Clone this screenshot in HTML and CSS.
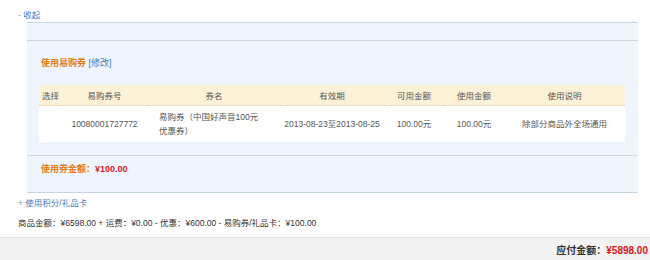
FILE: index.html
```html
<!DOCTYPE html>
<html lang="zh-CN">
<head>
    <meta charset="UTF-8">
    <title>使用易购券</title>
    <link rel="stylesheet" href="styles.css">
</head>
<body>

    <div class="page">
        <div class="toggle"><span class="sign">-</span> <a href="#">收起</a></div>

        <div class="panel">
            <div class="panel-tabs"></div>
            <div class="panel-body">
                <h3 class="coupon-title">使用易购券 <a href="#">[修改]</a></h3>
                <table class="coupons">
                    <colgroup>
                        <col class="c-select">
                        <col class="c-no">
                        <col class="c-name">
                        <col class="c-date">
                        <col class="c-avail">
                        <col class="c-used">
                        <col class="c-desc">
                    </colgroup>
                    <thead>
                        <tr>
                            <th>选择</th>
                            <th>易购券号</th>
                            <th>券名</th>
                            <th>有效期</th>
                            <th>可用金额</th>
                            <th>使用金额</th>
                            <th>使用说明</th>
                        </tr>
                    </thead>
                    <tbody>
                        <tr>
                            <td></td>
                            <td>10080001727772</td>
                            <td class="name">易购券（中国好声音100元优惠券）</td>
                            <td>2013-08-23至2013-08-25</td>
                            <td>100.00元</td>
                            <td>100.00元</td>
                            <td>除部分商品外全场通用</td>
                        </tr>
                    </tbody>
                </table>
            </div>
            <div class="panel-foot">使用券金额：<em>¥100.00</em></div>
        </div>

        <div class="toggle toggle-plus"><span class="sign">+</span> <a href="#">使用积分/礼品卡</a></div>

        <p class="summary">商品金额：¥6598.00 + 运费：¥0.00 - 优惠：¥600.00 - 易购券/礼品卡：¥100.00</p>
    </div>

    <div class="paybar">应付金额：<em>¥5898.00</em></div>

</body>
</html>
```

FILE: styles.css
```css
html, body {
    overflow: hidden;
}
body {
    margin: 0;
    font-family: "Liberation Sans", "Noto Sans CJK SC", sans-serif;
    font-size: 8.5px;
    color: #333;
    background-color: #fff;
}
a {
    color: #3c7cbf;
    text-decoration: none;
}
em {
    font-style: normal;
}
.page {
    padding: 8px 12px 0 18px;
}
.toggle {
    line-height: 14px;
    color: #8aa4bb;
}
.toggle .sign {
    color: #7a9ab6;
}
.panel {
    margin-left: 9px;
    background-color: #eef5fc;
    border-top: 1px solid #c6d6e1;
    border-bottom: 1px solid #c6d6e1;
}
.panel-tabs {
    height: 17px;
    border-bottom: 1px solid #c6d6e1;
}
.panel-body {
    padding: 14px 13px 13px 12px;
    border-bottom: 1px solid #c9dae6;
}
.coupon-title {
    margin: 0 0 14px 2px;
    font-size: 9px;
    line-height: 16px;
    color: #e67a16;
}
.coupon-title a {
    font-weight: normal;
}
.coupons {
    width: 586px;
    border-collapse: collapse;
    table-layout: fixed;
    background-color: #fff;
    color: #555;
}
.c-select { width: 22px; }
.c-no { width: 87px; }
.c-name { width: 132px; }
.c-date { width: 104px; }
.c-avail { width: 60px; }
.c-used { width: 60px; }
.c-desc { width: 121px; }
.coupons th {
    height: 20px;
    padding: 0;
    font-weight: normal;
    color: #555;
    background-color: #fdf1d8;
    border-bottom: 1px dotted #e3cf9f;
    text-align: center;
}
.coupons th:first-child {
    text-align: left;
    padding-left: 3px;
}
.coupons td {
    height: 36px;
    padding: 0;
    text-align: center;
    line-height: 14px;
    white-space: nowrap;
}
.coupons td.name {
    text-align: left;
    padding: 0 14px 0 11px;
    white-space: normal;
}
.panel-foot {
    padding: 6px 14px 16px;
    line-height: 14px;
    font-size: 9px;
    font-weight: bold;
    color: #e67a16;
}
.panel-foot em {
    color: #d4161c;
}
.toggle-plus {
    margin-top: 3px;
}
.summary {
    margin: 6px 0 0;
    line-height: 14px;
    color: #333;
}
.paybar {
    margin-top: 7px;
    height: 23px;
    padding-right: 2px;
    border-top: 1px solid #e4e4e4;
    background-color: #f3f3f3;
    text-align: right;
    line-height: 26px;
    font-size: 10px;
    font-weight: bold;
    color: #333;
}
.paybar em {
    color: #d4161c;
}
```
